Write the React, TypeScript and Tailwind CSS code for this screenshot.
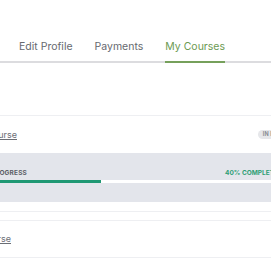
import React from "react";

const tabs = ["Edit Profile", "Payments", "My Courses"];

export default function App() {
  const active = "My Courses";
  return (
    <div className="w-[271px] h-[271px] overflow-hidden bg-white font-['Inter',sans-serif]">
      {/* Tabs */}
      <nav className="flex gap-[22px] pl-[19px] pt-[39px] border-b-2 border-[#dcdcdf]">
        {tabs.map((t) => (
          <button
            key={t}
            className={`-mb-[2px] pb-[6px] border-b-2 text-[10.5px] leading-[16px] ${
              t === active ? "border-[#76a05b] text-[#6c9a52]" : "border-transparent text-[#66696f]"
            }`}
          >
            {t}
          </button>
        ))}
      </nav>

      {/* Course cards */}
      <div className="mt-[52px] -ml-[46px] w-[360px]">
        <div className="border-t border-b border-[#eeeff2]">
          <div className="h-[37px] flex items-center px-[16px]">
            <div className="w-[47px] flex justify-end whitespace-nowrap">
              <a className="text-[9px] text-[#6b6e75] underline">My Course</a>
            </div>
            <span className="ml-auto mr-[-8px] h-[9px] px-[5px] rounded-full bg-[#e6e7ea] text-[5.5px] font-bold leading-[9px] text-[#8a8d93] tracking-wide whitespace-nowrap">
              IN PROGRESS
            </span>
          </div>
          <div className="bg-[#e3e5eb] h-[49px] px-[16px] pt-[17px]">
            <div className="flex items-center h-[8px] text-[6.5px] font-bold whitespace-nowrap">
              <div className="w-[57px] flex justify-end tracking-wide text-[#5b5e66]">PROGRESS</div>
              <div className="ml-[198px] text-[#2e9e75]">40% COMPLETE</div>
            </div>
            <div className="mt-[2px] h-[3px] bg-white">
              <div className="h-full bg-[#1f9873]" style={{ width: "40%" }} />
            </div>
          </div>
          <div className="h-[9px]" />
        </div>

        <div className="mt-[8px] border-t border-b border-[#eeeff2]">
          <div className="h-[36px] flex items-center px-[16px]">
            <div className="w-[41px] flex justify-end whitespace-nowrap">
              <a className="text-[9px] text-[#6b6e75] underline">Course</a>
            </div>
          </div>
        </div>
      </div>
    </div>
  );
}
